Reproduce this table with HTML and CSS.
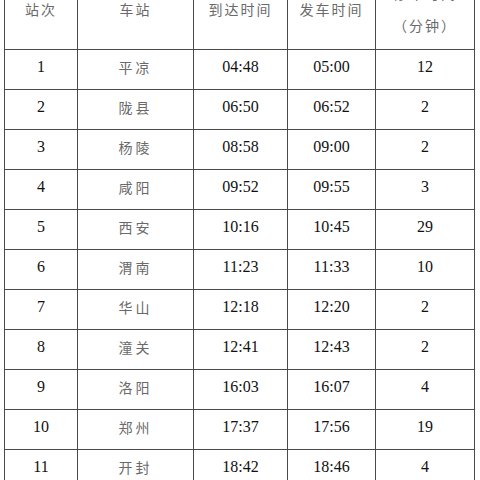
FILE: index.html
```html
<!DOCTYPE html>
<html lang="zh">
<head>
<meta charset="utf-8">
<link rel="stylesheet" href="styles.css">
</head>
<body>
<table class="timetable">
  <colgroup>
    <col class="c-no">
    <col class="c-st">
    <col class="c-arr">
    <col class="c-dep">
    <col class="c-stop">
  </colgroup>
  <thead>
    <tr>
      <th>站次</th>
      <th>车站</th>
      <th>到达时间</th>
      <th>发车时间</th>
      <th>停车时间<br>（分钟）</th>
    </tr>
  </thead>
  <tbody>
    <tr><td class="num">1</td><td class="cn">平凉</td><td class="num">04:48</td><td class="num">05:00</td><td class="num">12</td></tr>
    <tr><td class="num">2</td><td class="cn">陇县</td><td class="num">06:50</td><td class="num">06:52</td><td class="num">2</td></tr>
    <tr><td class="num">3</td><td class="cn">杨陵</td><td class="num">08:58</td><td class="num">09:00</td><td class="num">2</td></tr>
    <tr><td class="num">4</td><td class="cn">咸阳</td><td class="num">09:52</td><td class="num">09:55</td><td class="num">3</td></tr>
    <tr><td class="num">5</td><td class="cn">西安</td><td class="num">10:16</td><td class="num">10:45</td><td class="num">29</td></tr>
    <tr><td class="num">6</td><td class="cn">渭南</td><td class="num">11:23</td><td class="num">11:33</td><td class="num">10</td></tr>
    <tr><td class="num">7</td><td class="cn">华山</td><td class="num">12:18</td><td class="num">12:20</td><td class="num">2</td></tr>
    <tr><td class="num">8</td><td class="cn">潼关</td><td class="num">12:41</td><td class="num">12:43</td><td class="num">2</td></tr>
    <tr><td class="num">9</td><td class="cn">洛阳</td><td class="num">16:03</td><td class="num">16:07</td><td class="num">4</td></tr>
    <tr><td class="num">10</td><td class="cn">郑州</td><td class="num">17:37</td><td class="num">17:56</td><td class="num">19</td></tr>
    <tr><td class="num">11</td><td class="cn">开封</td><td class="num">18:42</td><td class="num">18:46</td><td class="num">4</td></tr>
  </tbody>
</table>
</body>
</html>
```
FILE: styles.css
```css
html, body {
  margin: 0;
  padding: 0;
  background: #ffffff;
  overflow: hidden;
}

body {
  height: 480px;
}

.timetable {
  border-collapse: collapse;
  table-layout: fixed;
  width: 470px;
  margin: -29px 0 0 4px;
}

.c-no { width: 73px; }
.c-st { width: 116px; }
.c-arr { width: 94px; }
.c-dep { width: 88px; }
.c-stop { width: 99px; }

.timetable th,
.timetable td {
  border: 1px solid #4a4a4a;
  padding: 0;
  text-align: center;
}

.timetable th {
  height: 78px;
  padding-bottom: 3px;
  box-sizing: border-box;
  font-family: "Noto Sans CJK SC", sans-serif;
  font-weight: 400;
  font-size: 14px;
  letter-spacing: 2px;
  color: #6a6a6a;
  line-height: 32px;
  vertical-align: middle;
}

.timetable td {
  height: 40px;
  padding-bottom: 5px;
  box-sizing: border-box;
}

.num {
  font-family: "Liberation Serif", "Times New Roman", serif;
  font-size: 16px;
  color: #111111;
}

.cn {
  font-family: "Noto Sans CJK SC", sans-serif;
  font-size: 14px;
  letter-spacing: 3px;
  color: #6a6a6a;
}
```
